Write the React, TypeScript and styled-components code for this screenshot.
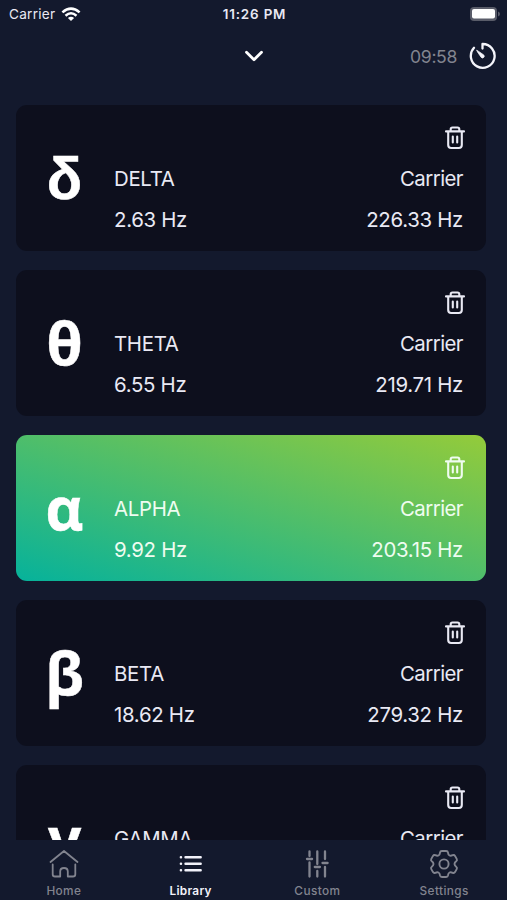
import React from "react";
import styled, { createGlobalStyle } from "styled-components";

const GlobalStyle = createGlobalStyle`
  *, *::before, *::after { box-sizing: border-box; }
  body { margin: 0; background: #13192d; }
`;

const Screen = styled.main`
  width: 507px;
  height: 900px;
  overflow: hidden;
  display: flex;
  flex-direction: column;
  background: #13192d;
  color: #e9e9f4;
  font-family: Inter, "Liberation Sans", sans-serif;
`;

const StatusBar = styled.header`
  flex: none;
  height: 28px;
  padding: 0 7px 0 9px;
  display: grid;
  grid-template-columns: 1fr auto 1fr;
  align-items: center;
  font-size: 13.6px;
  line-height: 28px;
`;

const Network = styled.div`
  display: flex;
  align-items: center;
  gap: 6px;
  letter-spacing: 0.25px;
`;

const Clock = styled.div`
  font-size: 13.4px;
  font-weight: 600;
  letter-spacing: 0.85px;
`;

const BatteryIcon = styled.svg`
  justify-self: end;
`;

const NavBar = styled.nav`
  flex: none;
  height: 57px;
  padding: 0 11px 1px;
  display: grid;
  grid-template-columns: 1fr 20px 1fr;
  align-items: center;

  > :first-child { grid-column: 2; }
`;

const Timer = styled.div`
  justify-self: end;
  display: flex;
  align-items: center;
  gap: 12px;
  font-size: 17.6px;
  letter-spacing: -0.35px;
  color: #82848f;
`;

const List = styled.section`
  flex: 1;
  min-height: 0;
  overflow: hidden;
  padding: 20px 21px 0 16px;
  display: flex;
  flex-direction: column;
  gap: 19px;
`;

const Card = styled.article<{ $active?: boolean }>`
  flex: none;
  height: 146px;
  border-radius: 11px;
  display: grid;
  grid-template-columns: 98px 1fr auto;
  padding: 19px 23px 0 0;
  background: ${(p) =>
    p.$active
      ? "linear-gradient(17deg, #06b29b 0%, #55bf66 55%, #94cb3a 100%)"
      : "#0d0f1d"};
  color: ${(p) => (p.$active ? "#effcf0" : "#e9e9f4")};
`;

const Symbol = styled.div<{ $flatTop?: boolean }>`
  height: 106px;
  padding-right: 1px;
  text-align: center;
  font: 700 58.5px/106px "Open Sans", "Noto Sans", sans-serif;
  ${(p) => p.$flatTop && `font-family: "Liberation Sans", sans-serif; line-height: 110px;`}
  color: #fff;
  -webkit-text-stroke: 0.5px #fff;
`;

const Column = styled.div<{ $end?: boolean }>`
  display: flex;
  flex-direction: column;
  align-items: ${(p) => (p.$end ? "flex-end" : "flex-start")};
  padding-top: ${(p) => (p.$end ? 0 : 35)}px;
`;

const DeleteButton = styled.button`
  height: 35px;
  margin-right: -3px;
  padding: 2px 0 0;
  border: 0;
  background: none;
  color: inherit;
  display: flex;
  align-items: flex-start;
`;

const Value = styled.span<{ $spacing?: number }>`
  height: 40.6px;
  font-size: 20.4px;
  line-height: 40.6px;
  letter-spacing: ${(p) => p.$spacing ?? -0.3}px;
  white-space: nowrap;
`;

const TabBar = styled.footer`
  flex: none;
  height: 60px;
  display: grid;
  grid-template-columns: repeat(4, 1fr);
`;

const Tab = styled.button<{ $active?: boolean }>`
  border: 0;
  padding: 9px 0 0 1px;
  background: none;
  display: flex;
  flex-direction: column;
  align-items: center;
  gap: 5px;
  font: ${(p) => (p.$active ? 600 : 500)} 11.8px/14px Inter, sans-serif;
  letter-spacing: ${(p) => (p.$active ? 0.3 : 0.4)}px;
  color: ${(p) => (p.$active ? "#f2f2fa" : "#82848f")};
`;

const WifiIcon = () => (
  <svg width="20" height="15" viewBox="0 0 20 15" fill="none" stroke="#fff">
    <path d="M1.4 5.4Q10-2.2 18.6 5.4" strokeWidth="2.6" />
    <path d="M4.5 8.7Q10 3.9 15.5 8.7" strokeWidth="2.5" />
    <path d="M10 14 6.9 11Q10 8.5 13.1 11Z" fill="#fff" stroke="none" />
  </svg>
);

const Battery = () => (
  <BatteryIcon width="30" height="15" viewBox="0 0 30 15">
    <rect x="0" y="0" width="27" height="14" rx="4" fill="#595c69" />
    <rect x="2" y="2" width="23" height="9.600" rx="2" fill="#fff" />
    <path d="M28 4.500q2 .8 2 2.500T28 9.500Z" fill="#595c69" />
  </BatteryIcon>
);

const Chevron = () => (
  <svg width="20" height="14" viewBox="0 0 20 14" fill="none">
    <path d="m2.500 3.300 7.500 7.500L17.500 3.300" stroke="#fff" strokeWidth="2.800" strokeLinecap="round" strokeLinejoin="round" />
  </svg>
);

const TimerIcon = () => (
  <svg width="27" height="28" viewBox="0 0 27 28" fill="none">
    <path d="M13.500 6.600V2A11.900 11.900 0 1 1 5 5.800" stroke="#f5f5fb" strokeWidth="2.300" strokeLinecap="round" strokeLinejoin="round" />
    <path d="M7.600 8.200c1.700.9 5 3.200 7.200 4.900a1.700 1.700 0 0 1-2.500 2.300c-1.500-2-3.800-5.300-4.700-7.200Z" fill="#f5f5fb" stroke="#f5f5fb" strokeWidth=".8" />
  </svg>
);

const Trash = () => (
  <svg width="22" height="24" viewBox="0 0 22 24" fill="none" stroke="currentColor" strokeWidth="2.100" strokeLinecap="round" strokeLinejoin="round">
    <path d="M2 5.400h18M4.200 6v13q0 3 3 3h7.600q3 0 3-3V6M6.700 5V3.300q0-1.800 1.800-1.800h5q1.800 0 1.800 1.800V5" />
    <path d="M8.800 10.500v6M13.200 10.500v6" />
  </svg>
);

const HomeIcon = () => (
  <svg width="30" height="30" viewBox="0 0 30 30" fill="none" stroke="currentColor" strokeWidth="1.800" strokeLinecap="round" strokeLinejoin="round">
    <path d="M1.500 13 15 2l13.500 11M3.700 15.500v9.700q0 2.300 2.300 2.300h5.200v-5q0-3.500 3.800-3.500t3.800 3.500v5H24q2.300 0 2.300-2.300v-9.700" />
  </svg>
);

const ListIcon = () => (
  <svg width="30" height="30" viewBox="0 0 30 30" stroke="currentColor" strokeWidth="2.400" strokeLinecap="round">
    <path d="M9.500 8.300h15.200M9.500 14.800h15.200M9.500 21.200h15.200" />
    <path d="M4.900 8.300h.1M4.900 14.800h.1M4.900 21.200h.1" strokeWidth="2.500" />
  </svg>
);

const SlidersIcon = () => (
  <svg width="30" height="30" viewBox="0 0 30 30" stroke="currentColor" strokeWidth="2.300" strokeLinecap="round">
    <path d="M7.500 2.500v4.500M5 10h5.100M7.500 13.500v14M15.300 2.500v12.500M12.800 18h5.100M15.300 22v5.500M23 2.500v7.500M20.500 14h5.100M23 18v9.500" />
  </svg>
);

const GearIcon = () => (
  <svg width="30" height="30" viewBox="0 0 30 30" fill="none" stroke="currentColor" strokeWidth="1.900" strokeLinejoin="round">
    <circle cx="15" cy="15" r="4.600" />
    <path d="M12.900 2h4.200q1.700 0 1.900 1.600.2 2.200 1.500 2.900 1.200.7 3.200-.3 1.500-.6 2.300.7l1.700 3q.8 1.400-.5 2.400-1.700 1.200-1.700 2.700t1.700 2.700q1.300 1 .5 2.400l-1.700 3q-.8 1.300-2.300.7-2-1-3.200-.3-1.300.7-1.500 2.900-.2 1.600-1.900 1.600h-4.200q-1.700 0-1.900-1.600-.2-2.200-1.500-2.900-1.200-.7-3.200.3-1.500.6-2.300-.7l-1.700-3q-.8-1.400.5-2.400 1.700-1.200 1.700-2.700t-1.700-2.700q-1.300-1-.5-2.400l1.700-3q.8-1.300 2.300-.7 2 1 3.200.3 1.300-.7 1.500-2.900.2-1.600 1.900-1.600Z" />
  </svg>
);

const waves = [
  { symbol: "δ", name: "DELTA", beat: "2.63 Hz", carrier: "226.33 Hz", flatTop: true },
  { symbol: "θ", name: "THETA", beat: "6.55 Hz", carrier: "219.71 Hz" },
  { symbol: "α", name: "ALPHA", beat: "9.92 Hz", carrier: "203.15 Hz", active: true },
  { symbol: "β", name: "BETA", beat: "18.62 Hz", carrier: "279.32 Hz" },
  { symbol: "γ", name: "GAMMA", beat: "", carrier: "" },
];

const tabs = [
  { label: "Home", Icon: HomeIcon },
  { label: "Library", Icon: ListIcon, active: true },
  { label: "Custom", Icon: SlidersIcon },
  { label: "Settings", Icon: GearIcon },
];

export default function App() {
  return (
    <>
      <GlobalStyle />
      <Screen>
        <StatusBar>
          <Network>Carrier <WifiIcon /></Network>
          <Clock>11:26 PM</Clock>
          <Battery />
        </StatusBar>
        <NavBar>
          <Chevron />
          <Timer>09:58 <TimerIcon /></Timer>
        </NavBar>
        <List>
          {waves.map((w) => (
            <Card key={w.name} $active={w.active}>
              <Symbol $flatTop={w.flatTop}>{w.symbol}</Symbol>
              <Column>
                <Value>{w.name}</Value>
                {w.beat && <Value>{w.beat}</Value>}
              </Column>
              <Column $end>
                <DeleteButton aria-label={`Delete ${w.name}`}><Trash /></DeleteButton>
                <Value $spacing={-0.55}>Carrier</Value>
                {w.carrier && <Value>{w.carrier}</Value>}
              </Column>
            </Card>
          ))}
        </List>
        <TabBar>
          {tabs.map(({ label, Icon, active }) => (
            <Tab key={label} $active={active}><Icon />{label}</Tab>
          ))}
        </TabBar>
      </Screen>
    </>
  );
}
